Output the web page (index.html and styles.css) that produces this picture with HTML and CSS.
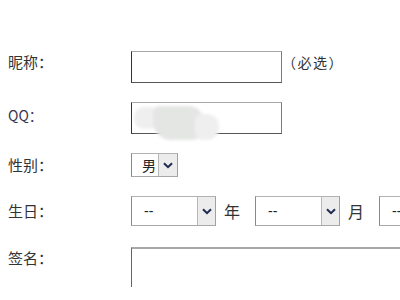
FILE: index.html
```html
<!DOCTYPE html>
<html lang="zh-CN">
<head>
<meta charset="utf-8">
<title>注册</title>
<link rel="stylesheet" href="styles.css">
</head>
<body>
<div class="page">
  <form class="form">
    <div class="row">
      <label class="label">昵称：</label>
      <input class="field" type="text">
      <span class="hint">（必选）</span>
    </div>
    <div class="row">
      <label class="label label-latin">QQ：</label>
      <div class="field-wrap">
        <input class="field" type="text">
        <div class="smudge">
          <span class="blob blob-a"></span>
          <span class="blob blob-b"></span>
          <span class="blob blob-c"></span>
        </div>
      </div>
    </div>
    <div class="row row-center">
      <label class="label">性别：</label>
      <div class="select select-gender">
        <span class="select-value">男</span>
        <span class="select-btn"><svg viewBox="0 0 10 7" width="10" height="7"><path d="M1 1.2 L5 5.2 L9 1.2" fill="none" stroke="#1c2a4f" stroke-width="2"/></svg></span>
      </div>
    </div>
    <div class="row row-center">
      <label class="label">生日：</label>
      <div class="select select-date">
        <span class="select-value">--</span>
        <span class="select-btn"><svg viewBox="0 0 10 7" width="10" height="7"><path d="M1 1.2 L5 5.2 L9 1.2" fill="none" stroke="#1c2a4f" stroke-width="2"/></svg></span>
      </div>
      <span class="unit">年</span>
      <div class="select select-date">
        <span class="select-value">--</span>
        <span class="select-btn"><svg viewBox="0 0 10 7" width="10" height="7"><path d="M1 1.2 L5 5.2 L9 1.2" fill="none" stroke="#1c2a4f" stroke-width="2"/></svg></span>
      </div>
      <span class="unit">月</span>
      <div class="select select-date">
        <span class="select-value">--</span>
        <span class="select-btn"><svg viewBox="0 0 10 7" width="10" height="7"><path d="M1 1.2 L5 5.2 L9 1.2" fill="none" stroke="#1c2a4f" stroke-width="2"/></svg></span>
      </div>
    </div>
    <div class="row row-sign">
      <label class="label">签名：</label>
      <textarea class="sign"></textarea>
    </div>
  </form>
</div>
</body>
</html>
```

FILE: styles.css
```css
html, body {
  margin: 0;
  padding: 0;
  background: #fff;
  overflow: hidden;
}

.page {
  width: 400px;
  height: 287px;
  overflow: hidden;
  background: #fff;
}

.form {
  display: flex;
  flex-direction: column;
  gap: 19px;
  padding: 51px 0 0 8px;
  font-family: "Noto Sans CJK SC", "Noto Sans", sans-serif;
  font-size: 15px;
  color: #333;
}

.row {
  display: flex;
  align-items: flex-start;
  white-space: nowrap;
}

.row-center {
  align-items: center;
}

.label {
  flex: none;
  width: 123px;
  line-height: 22px;
}

.label-latin {
  line-height: 26px;
  font-size: 14px;
  color: #3a3550;
}

.field-wrap {
  position: relative;
  display: flex;
}

.field {
  box-sizing: border-box;
  width: 151px;
  height: 32px;
  margin: 0;
  padding: 0 4px;
  border: 1px solid;
  border-color: #a8a8a8 #7a7a7a #555 #333;
  background: #fff;
  font: inherit;
}

.hint {
  margin-left: 0;
  font-size: 14px;
  line-height: 22px;
  letter-spacing: 1.5px;
  color: #333;
}

.smudge {
  position: absolute;
  left: 0;
  top: 0;
  width: 100px;
  height: 42px;
  filter: blur(1.5px);
}

.blob {
  position: absolute;
  display: block;
  border-radius: 8px;
}

.blob-a {
  left: 3px;
  top: 5px;
  width: 26px;
  height: 22px;
  background: #efefef;
  border-radius: 10px;
}

.blob-b {
  left: 22px;
  top: 4px;
  width: 50px;
  height: 34px;
  background: #e4e6e4;
  border-radius: 6px 14px 10px 18px;
}

.blob-c {
  left: 64px;
  top: 12px;
  width: 24px;
  height: 26px;
  background: #efefef;
  border-radius: 8px 12px 12px 8px;
}

.select {
  box-sizing: border-box;
  display: flex;
  align-items: stretch;
  flex: none;
  border: 1px solid;
  border-color: #b2b2b2 #a0a0a0 #a8a8a8 #8a8a8a;
  background: #fff;
}

.select-value {
  flex: 1;
  display: flex;
  align-items: center;
  color: #222;
}

.select-btn {
  flex: none;
  display: flex;
  align-items: center;
  justify-content: center;
  background: #ececec;
  border-left: 1px solid #b8b8b8;
}

.select-gender {
  width: 47px;
  height: 24px;
}

.select-gender .select-value {
  justify-content: flex-end;
  padding-right: 2px;
  font-size: 14px;
}

.select-gender .select-btn {
  width: 18px;
}

.select-date {
  width: 85px;
  height: 30px;
}

.select-date .select-value {
  padding-left: 12px;
  font-size: 14px;
  font-family: "Liberation Sans", sans-serif;
}

.select-date .select-btn {
  width: 17px;
}

.unit {
  flex: none;
  width: 39px;
  padding-left: 8px;
  box-sizing: border-box;
  font-size: 16px;
}

.row-sign {
  margin-top: 2px;
}

.sign {
  box-sizing: border-box;
  flex: none;
  width: 300px;
  height: 80px;
  margin: 0;
  border: 1px solid;
  border-color: #a8a8a8 #7a7a7a #555 #666;
  border-top-width: 2px;
  resize: none;
  background: #fff;
}
```
